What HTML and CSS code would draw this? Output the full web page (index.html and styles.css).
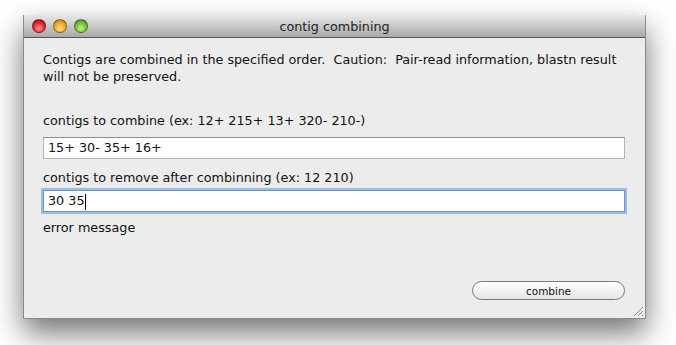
FILE: index.html
```html
<!DOCTYPE html>
<html lang="en">
<head>
  <meta charset="UTF-8">
  <title>contig combining</title>
  <link rel="stylesheet" href="styles.css">
</head>
<body>
  <div class="window">
    <div class="titlebar">
      <div class="lights">
        <span class="light close"></span>
        <span class="light minimize"></span>
        <span class="light zoom"></span>
      </div>
      <div class="title">contig combining</div>
    </div>

    <div class="content">
      <p class="note">Contigs are combined in the specified order.&nbsp; Caution:&nbsp; Pair-read information, blastn result will not be preserved.</p>

      <label class="label first">contigs to combine (ex: 12+ 215+ 13+ 320- 210-)</label>
      <div class="field">15+ 30- 35+ 16+</div>

      <label class="label">contigs to remove after combinning (ex: 12 210)</label>
      <div class="field focused">30 35<span class="caret"></span></div>

      <div class="error">error message</div>

      <div class="actions">
        <button class="btn">combine</button>
      </div>
    </div>

    <svg class="grip" width="12" height="12" viewBox="0 0 12 12">
      <path d="M11 2 L2 11 M11 6 L6 11 M11 10 L10 11" stroke="#8c8c8c" stroke-width="1" fill="none"/>
      <path d="M12 3 L3 12 M12 7 L7 12" stroke="#ffffff" stroke-width="1" fill="none"/>
    </svg>
  </div>
</body>
</html>
```

FILE: styles.css
```css
html {
  background: #ffffff;
}

body {
  margin: 0;
  padding: 15px 0 0 23px;
  min-height: 345px;
  box-sizing: border-box;
  font-family: 'DejaVu Sans', sans-serif;
  color: #111;
}

.window {
  position: relative;
  width: 621px;
  height: 303px;
  background: #ececec;
  border: 1px solid #8a8a8a;
  border-top: none;
  box-shadow: 0 14px 28px rgba(0, 0, 0, 0.55);
}

.titlebar {
  position: relative;
  height: 22px;
  background: linear-gradient(#e8e8e8, #a9a9a9);
  border-bottom: 1px solid #555;
  border-radius: 4px 4px 0 0;
  display: flex;
  align-items: center;
}

.lights {
  display: flex;
  gap: 7px;
  padding-left: 8px;
}

.light {
  width: 14px;
  height: 14px;
  border-radius: 50%;
  border: 1px solid rgba(0, 0, 0, 0.35);
  box-sizing: border-box;
}

.close {
  background: radial-gradient(circle at 50% 70%, #ff9090, #d8202a 60%, #9a1018);
}

.minimize {
  background: radial-gradient(circle at 50% 70%, #ffe08a, #e8a020 60%, #a86a10);
}

.zoom {
  background: radial-gradient(circle at 50% 70%, #c8f08a, #6cb830 60%, #3c7a18);
}

.title {
  position: absolute;
  left: 0;
  right: 0;
  top: 0;
  line-height: 23px;
  text-align: center;
  font-size: 12.75px;
  color: #222;
}

.content {
  padding: 13px 20px 0 19px;
  font-size: 12.75px;
}

.note {
  margin: 0;
  line-height: 17px;
}

.label {
  display: block;
  margin-top: 10px;
  line-height: 17px;
}

.label.first {
  margin-top: 27px;
}

.field {
  margin-top: 8px;
  height: 20px;
  background: #fff;
  border: 1px solid #b4b4b4;
  border-top-color: #8c8c8c;
  line-height: 20px;
  padding-left: 4px;
}

.field.focused {
  margin-top: 4px;
  border-color: #6d95c8;
  box-shadow: 0 0 0 2px #9dbbe3;
}

.caret {
  display: inline-block;
  width: 1px;
  height: 16px;
  background: #000;
  vertical-align: middle;
}

.error {
  margin-top: 7px;
  line-height: 17px;
}

.actions {
  display: flex;
  justify-content: flex-end;
  margin-top: 45px;
}

.btn {
  width: 153px;
  height: 19px;
  border: 1px solid #7a7a7a;
  border-radius: 10px;
  background: linear-gradient(#ffffff, #f2f2f2 50%, #e6e6e6);
  font-family: 'DejaVu Sans', sans-serif;
  font-size: 10.5px;
  color: #111;
  padding: 0;
}

.grip {
  position: absolute;
  right: 1px;
  bottom: 1px;
}
```
